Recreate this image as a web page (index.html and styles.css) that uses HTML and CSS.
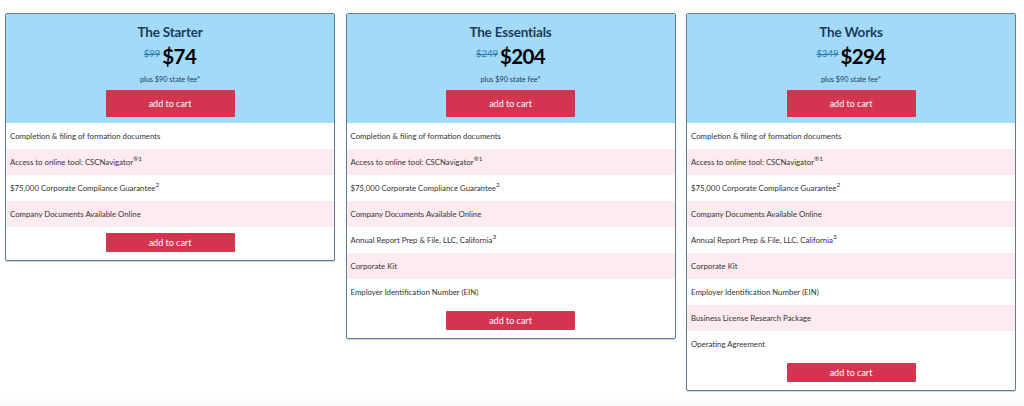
FILE: index.html
```html
<!DOCTYPE html>
<html>
<head>
<meta charset="utf-8">
<link rel="stylesheet" href="styles.css">
</head>
<body>
<div class="plans">
  <div class="card">
    <div class="head">
      <div class="title">The Starter</div>
      <div class="price"><s class="old">$99</s><span class="new">$74</span></div>
      <div class="fee">plus $90 state fee*</div>
      <button class="cart big">add to cart</button>
    </div>
    <ul class="features">
      <li>Completion &amp; filing of formation documents</li>
      <li>Access to online tool: CSCNavigator<sup>®1</sup></li>
      <li>$75,000 Corporate Compliance Guarantee<sup>2</sup></li>
      <li>Company Documents Available Online</li>
    </ul>
    <div class="foot"><button class="cart small">add to cart</button></div>
  </div>
  <div class="card">
    <div class="head">
      <div class="title">The Essentials</div>
      <div class="price"><s class="old">$249</s><span class="new">$204</span></div>
      <div class="fee">plus $90 state fee*</div>
      <button class="cart big">add to cart</button>
    </div>
    <ul class="features">
      <li>Completion &amp; filing of formation documents</li>
      <li>Access to online tool: CSCNavigator<sup>®1</sup></li>
      <li>$75,000 Corporate Compliance Guarantee<sup>2</sup></li>
      <li>Company Documents Available Online</li>
      <li>Annual Report Prep &amp; File, LLC, California<sup>3</sup></li>
      <li>Corporate Kit</li>
      <li>Employer Identification Number (EIN)</li>
    </ul>
    <div class="foot"><button class="cart small">add to cart</button></div>
  </div>
  <div class="card">
    <div class="head">
      <div class="title">The Works</div>
      <div class="price"><s class="old">$349</s><span class="new">$294</span></div>
      <div class="fee">plus $90 state fee*</div>
      <button class="cart big">add to cart</button>
    </div>
    <ul class="features">
      <li>Completion &amp; filing of formation documents</li>
      <li>Access to online tool: CSCNavigator<sup>®1</sup></li>
      <li>$75,000 Corporate Compliance Guarantee<sup>2</sup></li>
      <li>Company Documents Available Online</li>
      <li>Annual Report Prep &amp; File, LLC, California<sup>3</sup></li>
      <li>Corporate Kit</li>
      <li>Employer Identification Number (EIN)</li>
      <li>Business License Research Package</li>
      <li>Operating Agreement</li>
    </ul>
    <div class="foot"><button class="cart small">add to cart</button></div>
  </div>
</div>
<div class="bottom-band"></div>
</body>
</html>
```

FILE: styles.css
```css
html, body {
  margin: 0;
  padding: 0;
  background: #ffffff;
  font-family: Lato, "Open Sans", sans-serif;
}
body {
  width: 1024px;
  height: 406px;
  overflow: hidden;
  position: relative;
}
.plans {
  display: flex;
  align-items: flex-start;
  gap: 10.5px;
  padding: 13px 0 0 5px;
}
.card {
  width: 330px;
  box-sizing: border-box;
  border: 1px solid #5d7e96;
  border-radius: 2px;
  background: #fff;
  box-shadow: 0 1px 1px rgba(60, 90, 110, 0.25);
  display: flex;
  flex-direction: column;
}
.head {
  background: #a3daf8;
  display: flex;
  flex-direction: column;
  align-items: center;
  padding: 9px 0 6px;
}
.title {
  font-size: 13.5px;
  line-height: 18px;
  font-weight: 700;
  color: #1c3c5c;
  letter-spacing: -0.2px;
}
.price {
  display: flex;
  align-items: flex-start;
  height: 26px;
  margin-top: 2px;
}
.old {
  font-size: 9.5px;
  color: #2c7bb3;
  margin-top: 5px;
  margin-right: 2px;
  text-decoration-thickness: 1px;
}
.new {
  font-size: 20.5px;
  line-height: 26px;
  font-weight: 700;
  color: #000;
  letter-spacing: -0.6px;
}
.fee {
  font-size: 7.3px;
  line-height: 10px;
  color: #1c3c5c;
  margin-top: 6px;
}
.cart {
  border: 0;
  border-radius: 1px;
  background: #d3344f;
  color: #fff;
  font-family: Lato, "Open Sans", sans-serif;
  font-size: 9px;
  width: 129px;
  padding: 0;
  cursor: pointer;
}
.cart.big {
  height: 27px;
  margin-top: 5px;
}
.cart.small {
  height: 19px;
}
.features {
  list-style: none;
  margin: 0;
  padding: 0;
}
.features li {
  height: 26px;
  line-height: 26px;
  padding-left: 4px;
  font-size: 7.8px;
  color: #333;
}
.features li:nth-child(even) {
  background: #fdebef;
}
.features sup {
  font-size: 6.5px;
  line-height: 0;
  vertical-align: 4px;
}
.foot {
  display: flex;
  justify-content: center;
  padding: 6px 0 8px;
}
.bottom-band {
  position: absolute;
  left: 0;
  right: 0;
  bottom: 0;
  height: 9px;
  background: linear-gradient(#ffffff, #f7f7f7);
}
```
